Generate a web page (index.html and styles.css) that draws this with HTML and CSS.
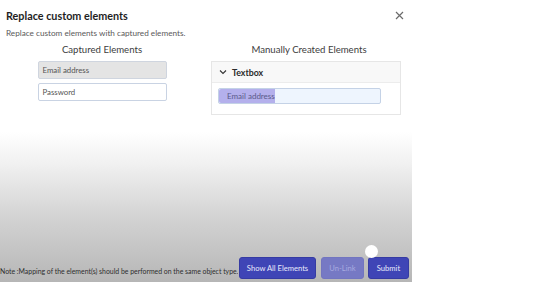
FILE: index.html
```html
<!DOCTYPE html>
<html>
<head>
<meta charset="utf-8">
<link rel="stylesheet" href="styles.css">
</head>
<body>
<div class="dialog">
  <div class="head">
    <h1 class="title">Replace custom elements</h1>
    <span class="close">
      <svg width="9" height="9" viewBox="0 0 9 9"><path d="M1 1L8 8M8 1L1 8" stroke="#6b6b6b" stroke-width="1.2" fill="none"/></svg>
    </span>
  </div>
  <p class="sub">Replace custom elements with captured elements.</p>
  <div class="cols">
    <div class="col left">
      <div class="col-title">Captured Elements</div>
      <div class="field filled">Email address</div>
      <div class="field">Password</div>
    </div>
    <div class="col right">
      <div class="col-title">Manually Created Elements</div>
      <div class="group">
        <div class="group-head">
          <svg width="8" height="6" viewBox="0 0 8 6"><path d="M1 1.5L4 4.5L7 1.5" stroke="#333" stroke-width="1.1" fill="none"/></svg>
          <span>Textbox</span>
        </div>
        <div class="group-body">
          <div class="mfield"><span class="sel">Email address</span></div>
        </div>
      </div>
    </div>
  </div>
  <div class="footer">
    <span class="note">Note :Mapping of the element(s) should be performed on the same object type.</span>
    <button class="btn show">Show All Elements</button>
    <button class="btn disabled">Un-Link</button>
    <button class="btn submit">Submit</button>
    <span class="cursor"></span>
  </div>
</div>
</body>
</html>
```

FILE: styles.css
```css
html, body {
  margin: 0;
  padding: 0;
  background: #ffffff;
}
body {
  font-family: "Lato", "Open Sans", sans-serif;
  width: 534px;
  height: 282px;
  overflow: hidden;
}
.dialog {
  width: 412px;
  height: 282px;
  display: flex;
  flex-direction: column;
  background: linear-gradient(to bottom, #ffffff 0px, #ffffff 132px, #f0f0f0 165px, #d4d4d4 215px, #b6b6b6 282px);
  box-sizing: border-box;
}
.head {
  display: flex;
  justify-content: space-between;
  align-items: center;
  padding: 7px 6px 0 6px;
  height: 16px;
}
.title {
  margin: 0;
  font-size: 10.8px;
  font-weight: 700;
  color: #1f1f1f;
}
.close {
  display: flex;
  margin-right: 2px;
  margin-top: 0;
}
.sub {
  margin: 5px 0 0 6px;
  font-size: 8.2px;
  color: #5a5a5a;
}
.cols {
  display: flex;
  margin-top: 5px;
}
.col {
  display: flex;
  flex-direction: column;
}
.left {
  width: 204px;
  align-items: center;
}
.right {
  width: 196px;
  margin-left: 7px;
}
.col-title {
  font-size: 9.6px;
  color: #3d3d3d;
  text-align: center;
  height: 14px;
  line-height: 14px;
  margin-bottom: 4px;
}
.field {
  box-sizing: border-box;
  width: 129px;
  height: 18px;
  border: 1px solid #c9d3e3;
  border-radius: 2px;
  font-size: 7.8px;
  color: #555;
  padding-left: 4px;
  line-height: 16px;
  background: #fff;
  margin-bottom: 3px;
}
.field.filled {
  background: #e4e4e4;
  border-color: #cfd5df;
  margin-bottom: 4px;
}
.group {
  width: 190px;
  border: 1px solid #e6e6e6;
  box-sizing: border-box;
  height: 54px;
  background: #fff;
}
.group-head {
  display: flex;
  align-items: center;
  gap: 5px;
  height: 20px;
  padding-left: 7px;
  background: #f8f8f8;
  border-bottom: 1px solid #ececec;
  font-size: 8.8px;
  font-weight: 700;
  color: #2a2a2a;
}
.group-body {
  padding: 5px 0 0 6px;
}
.mfield {
  box-sizing: border-box;
  width: 163px;
  height: 16px;
  border: 1px solid #c4d2e6;
  border-radius: 2px;
  background: #eef5fe;
  font-size: 8px;
  line-height: 14px;
  color: #5a5a8a;
  display: flex;
}
.sel {
  background: #b4b0ec;
  padding-left: 8px;
  border-radius: 2px 0 0 2px;
}
.footer {
  margin-top: auto;
  display: flex;
  align-items: flex-end;
  padding-bottom: 3px;
  position: relative;
}
.note {
  font-size: 6.9px;
  color: #2e2e2e;
  margin-right: 1px;
  margin-bottom: 4px;
  white-space: nowrap;
  width: 238px;
  overflow: hidden;
}
.btn {
  font-family: inherit;
  font-size: 7.6px;
  color: #e8e9fb;
  background: #3f45b6;
  border: 1px solid #363ba3;
  border-radius: 3px;
  height: 22px;
  padding: 0;
  margin-left: 5px;
  white-space: nowrap;
  box-sizing: border-box;
}
.btn.show {
  margin-left: 0;
  width: 77px;
}
.btn.disabled {
  background: #7679c4;
  border-color: #7275c0;
  color: #a7a9e0;
  width: 43px;
}
.btn.submit {
  width: 41px;
  margin-left: 4px;
}
.cursor {
  position: absolute;
  left: 365px;
  top: -12px;
  width: 13px;
  height: 13px;
  border-radius: 50%;
  background: #ffffff;
}
```
